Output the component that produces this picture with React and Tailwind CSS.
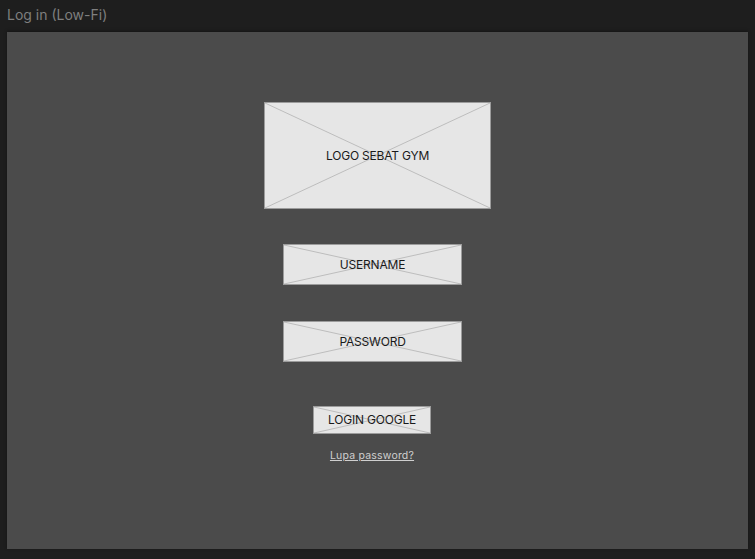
import React from "react";

function Placeholder({ label, className, textClass = "text-[12px]" }) {
  return (
    <div className={"relative flex items-center justify-center border border-[#9c9c9c] bg-[#e6e6e6] " + className}>
      <svg className="absolute inset-0 h-full w-full" viewBox="0 0 100 100" preserveAspectRatio="none">
        <line x1="0" y1="0" x2="100" y2="100" stroke="#bdbdbd" strokeWidth="1" vectorEffect="non-scaling-stroke" />
        <line x1="100" y1="0" x2="0" y2="100" stroke="#bdbdbd" strokeWidth="1" vectorEffect="non-scaling-stroke" />
      </svg>
      <span className={"relative text-[#1a1a1a] tracking-[-0.2px] " + textClass}>{label}</span>
    </div>
  );
}

export default function App() {
  return (
    <div className="h-[559px] w-[755px] bg-[#1e1e1e] font-['Inter',sans-serif] flex flex-col">
      <div className="h-[32px] pl-[7px] pt-[4px] text-[14px] text-[#7f7f7f]">Log in (Low-Fi)</div>
      <div className="ml-[7px] w-[741px] h-[517px] bg-[#4b4b4b] shadow-[0_-1px_3px_rgba(0,0,0,0.35)] flex flex-col items-center pt-[70px]">
        <Placeholder label="LOGO SEBAT GYM" className="w-[227px] h-[107px]" />
        <Placeholder label="USERNAME" className="w-[179px] h-[41px] mt-[35px] mr-[10px]" />
        <Placeholder label="PASSWORD" className="w-[179px] h-[41px] mt-[36px] mr-[10px]" />
        <Placeholder label="LOGIN GOOGLE" className="w-[118px] h-[28px] mt-[44px] mr-[11px]" />
        <a className="mt-[14px] mr-[11px] text-[10.5px] tracking-[0.2px] text-[#cfcfcf] underline">Lupa password?</a>
      </div>
    </div>
  );
}
